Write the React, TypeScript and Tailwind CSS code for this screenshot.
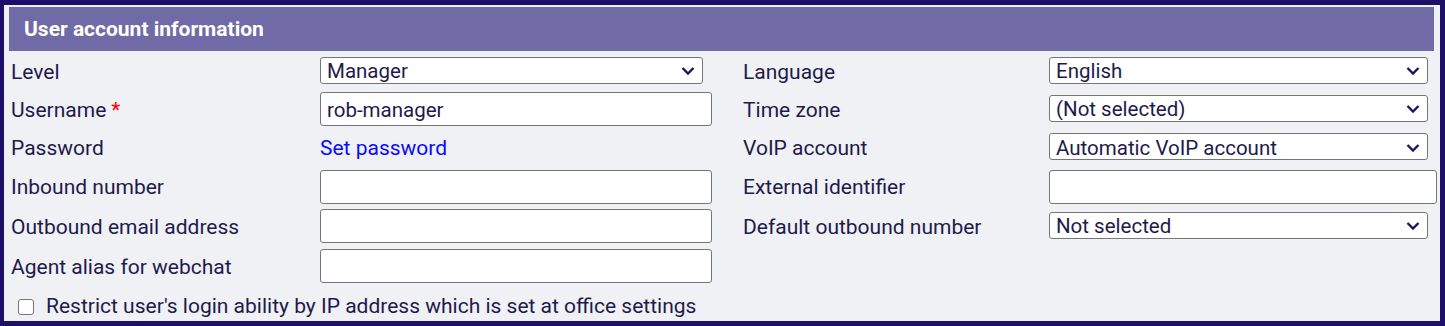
import { ReactNode } from "react";

const FONT = "font-['Roboto','Liberation_Sans',sans-serif]";

const Chevron = () => (
  <svg
    width="14"
    height="9"
    viewBox="0 0 14 9"
    className="pointer-events-none absolute right-[8px] top-1/2 -translate-y-1/2"
  >
    <path d="M1.5 1.5 L7 7 L12.5 1.5" fill="none" stroke="#1e1466" strokeWidth="2.4" />
  </svg>
);

const SelectBox = ({ value, width }: { value: string; width: string }) => (
  <div className={`relative ${width}`}>
    <select
      defaultValue={value}
      className={`h-[27px] w-full appearance-none rounded-[3px] border border-[#767676] bg-white pl-[6px] pr-6 pt-[2px] text-[20.5px] leading-none text-[#1e1b4b] outline-none ${FONT}`}
    >
      <option>{value}</option>
    </select>
    <Chevron />
  </div>
);

const TextBox = ({ value = "", width }: { value?: string; width: string }) => (
  <input
    defaultValue={value}
    className={`h-[34px] ${width} rounded-[3px] border border-[#767676] bg-white px-[6px] pt-[1px] text-[20.5px] text-[#1e1b4b] outline-none ${FONT}`}
  />
);

const Label = ({ children }: { children: ReactNode }) => (
  <div className="flex items-center pl-[2px] pt-[3px] text-[21px] text-[#1e1b4b]">{children}</div>
);

const Cell = ({ children }: { children?: ReactNode }) => (
  <div className="flex items-center">{children}</div>
);

export default function App() {
  return (
    <div className={`h-[326px] w-full bg-[#1d0f6a] pb-[5px] pl-[4px] pr-[5px] pt-[5px] ${FONT}`}>
      <div className="flex h-full flex-col bg-[#f0f1f5] pl-[5px] pr-[6px] pt-[2px]">
        <div className="flex h-[44px] shrink-0 items-center bg-[#706aa6] pl-[15px] pt-[2px] text-[21px] font-bold text-white">
          User account information
        </div>

        <div className="mt-[1px] grid shrink-0 grid-cols-[311px_421px_308px_1fr] grid-rows-[38px_38px_39px_39px_40px_40px]">
          <Label>Level</Label>
          <Cell>
            <SelectBox value="Manager" width="w-[383px]" />
          </Cell>
          <Label>Language</Label>
          <Cell>
            <SelectBox value="English" width="w-[379px]" />
          </Cell>

          <Label>
            Username <span className="ml-[5px] text-[#ff0000]">*</span>
          </Label>
          <Cell>
            <TextBox value="rob-manager" width="w-[392px]" />
          </Cell>
          <Label>Time zone</Label>
          <Cell>
            <SelectBox value="(Not selected)" width="w-[379px]" />
          </Cell>

          <Label>Password</Label>
          <Cell>
            <a href="#" className="pt-[3px] text-[21px] text-[#0a0aff]">
              Set password
            </a>
          </Cell>
          <Label>VoIP account</Label>
          <Cell>
            <SelectBox value="Automatic VoIP account" width="w-[379px]" />
          </Cell>

          <Label>Inbound number</Label>
          <Cell>
            <TextBox width="w-[392px]" />
          </Cell>
          <Label>External identifier</Label>
          <Cell>
            <TextBox width="w-[388px] shrink-0" />
          </Cell>

          <Label>Outbound email address</Label>
          <Cell>
            <TextBox width="w-[392px]" />
          </Cell>
          <Label>Default outbound number</Label>
          <Cell>
            <SelectBox value="Not selected" width="w-[379px]" />
          </Cell>

          <Label>Agent alias for webchat</Label>
          <Cell>
            <TextBox width="w-[392px]" />
          </Cell>
          <Cell />
          <Cell />
        </div>

        <label className="flex flex-1 items-center gap-[12px] pl-[9px] pt-[5px] text-[21px] text-[#1e1b4b]">
          <span className="h-[16px] w-[16px] shrink-0 rounded-[3px] border border-[#767676] bg-white" />
          Restrict user's login ability by IP address which is set at office settings
        </label>
      </div>
    </div>
  );
}
